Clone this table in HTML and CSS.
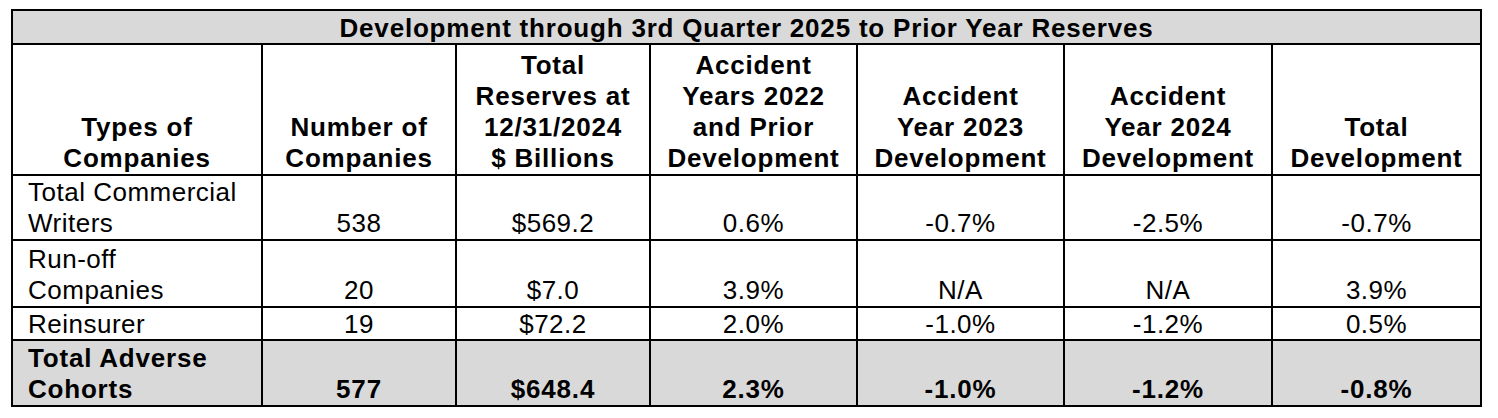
FILE: index.html
```html
<!DOCTYPE html>
<html lang="en">
<head>
<meta charset="utf-8">
<title>Development through 3rd Quarter 2025 to Prior Year Reserves</title>
<link rel="stylesheet" href="styles.css">
</head>
<body>
<table class="dev-table">
  <colgroup>
    <col class="c-type">
    <col class="c-num">
    <col class="c-res">
    <col class="c-ay22">
    <col class="c-ay23">
    <col class="c-ay24">
    <col class="c-total">
  </colgroup>
  <thead>
    <tr class="title-row">
      <th colspan="7">Development through 3rd Quarter 2025 to Prior Year Reserves</th>
    </tr>
    <tr class="head-row">
      <th>Types of<br>Companies</th>
      <th>Number of<br>Companies</th>
      <th>Total<br>Reserves at<br>12/31/2024<br>$ Billions</th>
      <th>Accident<br>Years 2022<br>and Prior<br>Development</th>
      <th>Accident<br>Year 2023<br>Development</th>
      <th>Accident<br>Year 2024<br>Development</th>
      <th>Total<br>Development</th>
    </tr>
  </thead>
  <tbody>
    <tr class="row-commercial">
      <td class="label">Total Commercial<br>Writers</td>
      <td>538</td>
      <td>$569.2</td>
      <td>0.6%</td>
      <td>-0.7%</td>
      <td>-2.5%</td>
      <td>-0.7%</td>
    </tr>
    <tr class="row-runoff">
      <td class="label">Run-off<br>Companies</td>
      <td>20</td>
      <td>$7.0</td>
      <td>3.9%</td>
      <td>N/A</td>
      <td>N/A</td>
      <td>3.9%</td>
    </tr>
    <tr class="row-reins">
      <td class="label">Reinsurer</td>
      <td>19</td>
      <td>$72.2</td>
      <td>2.0%</td>
      <td>-1.0%</td>
      <td>-1.2%</td>
      <td>0.5%</td>
    </tr>
    <tr class="total-row">
      <td class="label">Total Adverse<br>Cohorts</td>
      <td>577</td>
      <td>$648.4</td>
      <td>2.3%</td>
      <td>-1.0%</td>
      <td>-1.2%</td>
      <td>-0.8%</td>
    </tr>
  </tbody>
</table>
</body>
</html>
```
FILE: styles.css
```css
html, body {
  margin: 0;
  background: #ffffff;
}

body {
  padding: 9px 11px;
  font-family: "Liberation Sans", Arial, Helvetica, sans-serif;
  color: #000000;
}

.dev-table {
  border-collapse: collapse;
  table-layout: fixed;
  width: 1469px;
  font-size: 26px;
  line-height: 31px;
  letter-spacing: 0.5px;
}

.c-type { width: 250px; }
.c-num { width: 194px; }
.c-res { width: 194px; }
.c-ay22 { width: 207px; }
.c-ay23 { width: 207px; }
.c-ay24 { width: 208px; }
.c-total { width: 209px; }

.dev-table th,
.dev-table td {
  border: 2px solid #000000;
  padding: 2px 0 0;
  text-align: center;
  vertical-align: bottom;
  white-space: nowrap;
}

.dev-table th {
  font-weight: bold;
  letter-spacing: 0.8px;
}

.title-row th {
  background: #d9d9d9;
  line-height: 29px;
  padding-top: 3px;
}

.head-row th {
  padding-top: 5px;
}

.row-commercial td {
  padding-top: 1px;
}

.row-runoff td {
  padding-top: 3px;
}

.row-reins td {
  line-height: 29px;
  padding-top: 2px;
}

.dev-table td.label {
  text-align: left;
  padding-left: 15px;
}

.total-row td {
  background: #d9d9d9;
  font-weight: bold;
  letter-spacing: 0.8px;
  padding-top: 2px;
}
```
